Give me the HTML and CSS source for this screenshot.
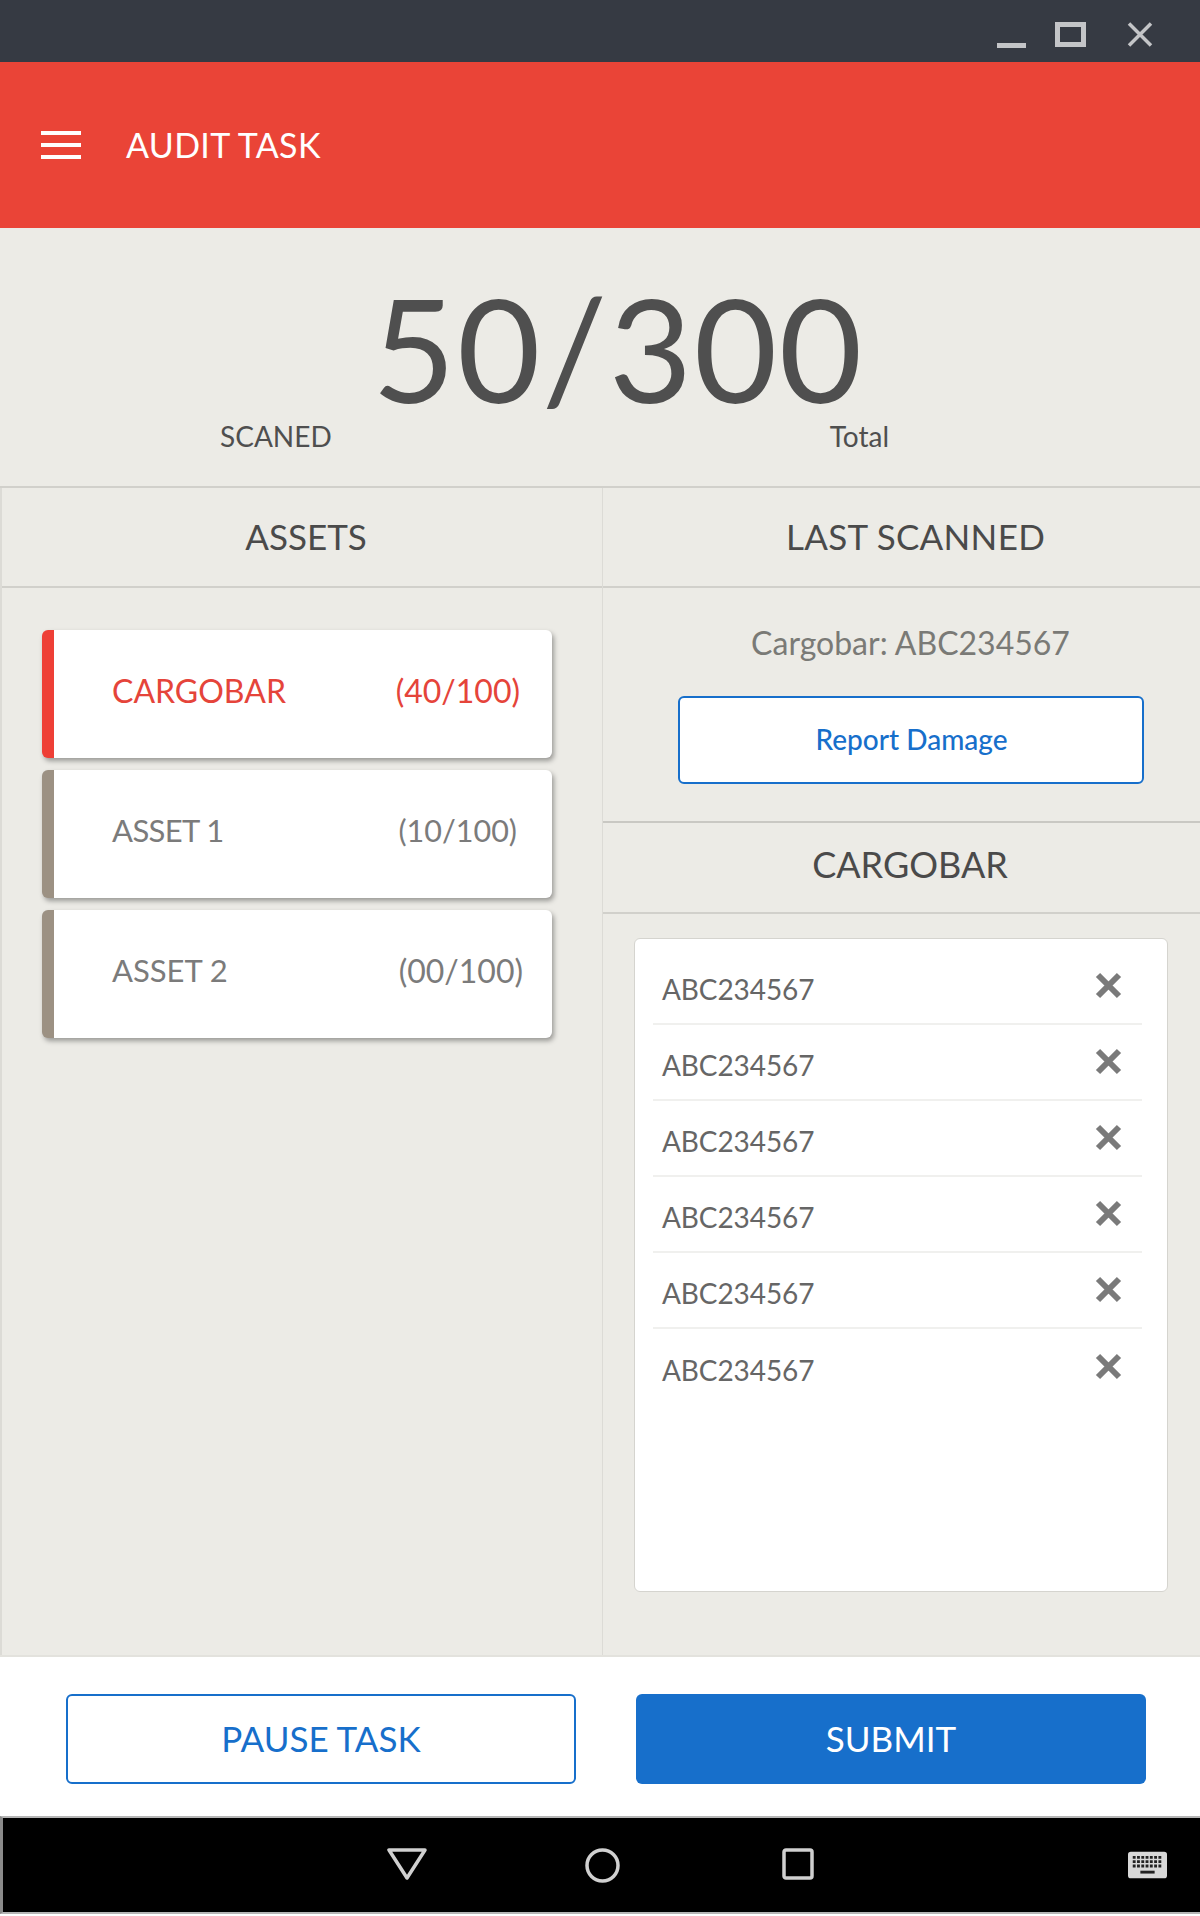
FILE: index.html
```html
<!DOCTYPE html>
<html lang="en">
<head>
<meta charset="utf-8">
<title>Audit Task</title>
<link rel="stylesheet" href="styles.css">
</head>
<body>
<div class="screen">
  <div class="titlebar">
    <svg class="win-icon win-min" viewBox="0 0 29 5"><rect width="29" height="5" fill="#c4c5c8"/></svg>
    <svg class="win-icon win-max" viewBox="0 0 31 25"><rect x="2.500" y="2.500" width="26" height="20" fill="none" stroke="#c4c5c8" stroke-width="5"/></svg>
    <svg class="win-icon win-close" viewBox="0 0 26 25"><path d="M2 1.500L24 23.500M24 1.500L2 23.500" fill="none" stroke="#c4c5c8" stroke-width="3.500"/></svg>
  </div>
  <header class="appbar">
    <div class="burger"><span></span><span></span><span></span></div>
    <h1 class="appbar-title">AUDIT TASK</h1>
  </header>
  <section class="hero">
    <div class="hero-count">50/300</div>
    <div class="hero-labels"><span class="label-scanned">SCANED</span><span class="label-total">Total</span></div>
  </section>
  <main class="columns">
    <section class="col col-left">
      <h2 class="tab tab-assets">ASSETS</h2>
      <div class="asset-list">
        <div class="asset active"><span class="asset-name">CARGOBAR</span><span class="asset-count c0">(40/100)</span></div>
        <div class="asset"><span class="asset-name n1">ASSET 1</span><span class="asset-count c1">(10/100)</span></div>
        <div class="asset"><span class="asset-name">ASSET 2</span><span class="asset-count c2">(00/100)</span></div>
      </div>
    </section>
    <section class="col col-right">
      <h2 class="tab tab-last">LAST SCANNED</h2>
      <div class="last">
        <p class="last-code">Cargobar: ABC234567</p>
        <button class="report">Report Damage</button>
      </div>
      <h2 class="tab tab-cargo">CARGOBAR</h2>
      <div class="scan-wrap">
        <ul class="scan-list">
          <li class="scan"><span>ABC234567</span><svg class="scan-x" viewBox="0 0 27 27"><path d="M3 3L24 24M24 3L3 24"/></svg></li>
          <li class="scan"><span>ABC234567</span><svg class="scan-x" viewBox="0 0 27 27"><path d="M3 3L24 24M24 3L3 24"/></svg></li>
          <li class="scan"><span>ABC234567</span><svg class="scan-x" viewBox="0 0 27 27"><path d="M3 3L24 24M24 3L3 24"/></svg></li>
          <li class="scan"><span>ABC234567</span><svg class="scan-x" viewBox="0 0 27 27"><path d="M3 3L24 24M24 3L3 24"/></svg></li>
          <li class="scan"><span>ABC234567</span><svg class="scan-x" viewBox="0 0 27 27"><path d="M3 3L24 24M24 3L3 24"/></svg></li>
          <li class="scan"><span>ABC234567</span><svg class="scan-x" viewBox="0 0 27 27"><path d="M3 3L24 24M24 3L3 24"/></svg></li>
        </ul>
      </div>
    </section>
  </main>
  <footer class="actions">
    <button class="btn btn-outline">PAUSE TASK</button>
    <button class="btn btn-solid">SUBMIT</button>
  </footer>
  <nav class="navbar">
    <svg class="nav-back" viewBox="0 0 40 33"><path d="M2 2H38L20 30Z" fill="none" stroke="#d0d0d0" stroke-width="3.500" stroke-linejoin="round"/></svg>
    <svg class="nav-home" viewBox="0 0 35 35"><circle cx="17.500" cy="17.500" r="15.500" fill="none" stroke="#d0d0d0" stroke-width="3.500"/></svg>
    <svg class="nav-recent" viewBox="0 0 32 32"><rect x="2" y="2" width="28" height="28" rx="2" fill="none" stroke="#d0d0d0" stroke-width="3.500"/></svg>
    <svg class="nav-kbd" viewBox="0 0 41 28">
      <rect width="41" height="28" rx="3" fill="#d8d8d8"/>
      <path d="M5 6H36M5 10.500H36M5 15H36" stroke="#222" stroke-width="3" stroke-dasharray="3 1.500" fill="none"/>
      <rect x="13" y="20" width="15" height="3" fill="#222"/>
    </svg>
  </nav>
</div>
</body>
</html>
```
FILE: styles.css
```css
* { box-sizing: border-box; }
html, body { margin: 0; padding: 0; }
body { font-family: "Lato", "Open Sans", sans-serif; background: #fff; }
.screen { width: 1200px; height: 1916px; display: flex; flex-direction: column; overflow: hidden; }

.titlebar { height: 62px; background: #363a43; display: flex; align-items: flex-start; padding-top: 22px; flex: none; }
.win-icon { display: block; flex: none; }
.win-min { width: 29px; height: 5px; margin: 21px 0 0 997px; }
.win-max { width: 31px; height: 25px; margin-left: 29px; }
.win-close { width: 26px; height: 25px; margin-left: 41px; }

.appbar { height: 166px; flex: none; background: #ea4437; display: flex; align-items: flex-start; padding: 69px 0 0 41px; color: #fff; }
.burger { width: 40px; display: flex; flex-direction: column; gap: 8px; }
.burger span { display: block; height: 4px; background: #fff; }
.appbar-title { margin: -8px 0 0 45px; font-size: 34px; font-weight: 400; line-height: 44px; letter-spacing: .35px; }

.hero { height: 258px; flex: none; background: #ecebe6; color: #4f4f4f; }
.hero-count { padding: 57px 0 0 372px; font-size: 144px; line-height: 126px; font-weight: 400; height: 191px; letter-spacing: 1.500px; }
.hero-labels { display: flex; padding-left: 220px; font-size: 28px; line-height: 34px; }
.label-total { margin-left: 498px; }

.columns { height: 1171px; flex: none; display: grid; grid-template-columns: 603px 597px; background: #ecebe6; border-top: 2px solid #d1d0cb; border-bottom: 2px solid #e3e2dd; }
.col { min-width: 0; }
.col-left { border-left: 2px solid #dcdbd6; border-right: 1px solid #dcdbd6; }
.tab { margin: 0; height: 100px; display: flex; align-items: center; justify-content: center; font-size: 35px; font-weight: 400; color: #4a4a4a; border-bottom: 2px solid #d1d0cb; padding-bottom: 3px; }
.tab-assets { padding-left: 8px; }
.tab-last { padding-left: 28px; letter-spacing: .3px; }
.tab-cargo { height: 91px; padding: 0 0 7px 17px; font-size: 36px; }

.asset-list { display: flex; flex-direction: column; gap: 12px; padding: 42px 0 0 40px; }
.asset { width: 510px; height: 128px; background: #fff; border-left: 12px solid #9c9183; border-radius: 6px; box-shadow: 2px 3px 5px rgba(0,0,0,.35); display: flex; align-items: center; justify-content: space-between; padding: 0 32px 8px 58px; font-size: 31px; color: #7b7b7b; }
.asset.active { border-left-color: #ee3f36; color: #e5443a; }
.active .asset-name { font-size: 32px; }
.c0 { font-size: 32px; }
.n1 { letter-spacing: -.6px; }
.c1 { margin-right: 3px; font-size: 30.500px; }
.c2 { margin-right: -3px; font-size: 32px; }

.last { height: 235px; border-bottom: 2px solid #c9c8c3; display: flex; flex-direction: column; align-items: center; padding: 33px 0 0 18px; }
.last-code { margin: 0; font-size: 32px; line-height: 44px; color: #7a7a76; }
.report { width: 466px; height: 88px; margin-top: 31px; background: #fff; border: 2px solid #176fcb; border-radius: 6px; font: inherit; font-size: 28px; font-weight: 500; color: #176fcb; padding: 0 0 3px 2px; }

.scan-wrap { padding: 24px 0 0 31px; }
.scan-list { list-style: none; margin: 0; padding: 10px 25px 0 18px; width: 534px; height: 654px; background: #fff; border: 1px solid #d5d4cf; border-radius: 6px; }
.scan { height: 76px; display: flex; align-items: center; justify-content: space-between; padding: 0 20px 0 9px; font-size: 28px; letter-spacing: -.1px; color: #666; border-bottom: 2px solid #f0f0ee; }
.scan:last-child { border-bottom: none; }
.scan span { padding-top: 6px; }
.scan-x { width: 27px; height: 27px; margin-bottom: 2px; }
.scan-x path { fill: none; stroke: #7a7a7a; stroke-width: 6; }

.actions { height: 159px; background: #fff; display: flex; padding: 37px 54px 0 66px; gap: 60px; flex: none; }
.btn { width: 510px; height: 90px; border-radius: 6px; font: inherit; font-size: 35px; padding-bottom: 3px; }
.btn-outline { background: #fff; border: 2px solid #176fcb; color: #176fcb; }
.btn-solid { background: #176fcb; border: none; color: #fff; }

.navbar { height: 98px; flex: none; background: #000; border-top: 2px solid #b5b5b5; border-bottom: 2px solid #b5b5b5; border-left: 3px solid #8a8a8a; display: flex; align-items: flex-start; padding: 30px 0 0 384px; }
.nav-back { width: 40px; height: 33px; }
.nav-home { width: 35px; height: 35px; margin-left: 158px; }
.nav-recent { width: 32px; height: 32px; margin-left: 162px; }
.nav-kbd { width: 39px; height: 28px; margin: 3px 0 0 314px; }
```
